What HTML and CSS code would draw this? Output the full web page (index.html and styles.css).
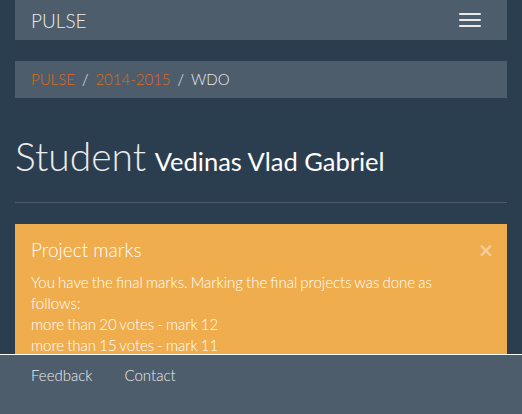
FILE: index.html
```html
<!DOCTYPE html>
<html lang="en">

<head>
    <meta charset="UTF-8">
    <meta name="viewport" content="width=device-width, initial-scale=1.0">
    <title>Student - PULSE</title>
    <link rel="stylesheet" href="styles.css">
</head>

<body>
    <div class="container">
        <nav class="navbar">
            <a class="brand" href="#">PULSE</a>
            <button class="toggle" type="button">
                <span class="bar"></span>
                <span class="bar"></span>
                <span class="bar"></span>
            </button>
        </nav>

        <ul class="breadcrumb">
            <li><a href="#">PULSE</a></li>
            <li><a href="#">2014-2015</a></li>
            <li class="active">WDO</li>
        </ul>

        <div class="page-header">
            <h1>Student <small>Vedinas Vlad Gabriel</small></h1>
        </div>

        <div class="alert">
            <button class="close" type="button">&times;</button>
            <h4>Project marks</h4>
            <p>You have the final marks. Marking the final projects was done as follows:<br>
                more than 20 votes - mark 12<br>
                more than 15 votes - mark 11</p>
        </div>
    </div>

    <footer class="footer">
        <ul class="footer-links">
            <li><a href="#">Feedback</a></li>
            <li><a href="#">Contact</a></li>
        </ul>
    </footer>
</body>

</html>
```

FILE: styles.css
```css
* {
    margin: 0;
    padding: 0;
    box-sizing: border-box;
}

body {
    background-color: #2b3e50;
    color: #ebebeb;
    font-family: Lato, "Open Sans", sans-serif;
    font-size: 15px;
    font-weight: 300;
    line-height: 21px;
    height: 414px;
    overflow: hidden;
}

a {
    text-decoration: none;
}

.container {
    padding: 0 15px;
}

/* top navbar */
.navbar {
    display: flex;
    justify-content: space-between;
    height: 40px;
    background-color: #4e5d6c;
    margin-bottom: 21px;
}

.brand {
    color: #ebebeb;
    font-size: 19px;
    line-height: 21px;
    padding: 10px 16px;
}

.toggle {
    margin: 3px 15px 0 0;
    padding: 9px 10px;
    height: 34px;
    background: none;
    border: 1px solid transparent;
    display: flex;
    flex-direction: column;
    gap: 4px;
}

.bar {
    display: block;
    width: 22px;
    height: 2px;
    background-color: #ebebeb;
    border-radius: 1px;
}

/* breadcrumb */
.breadcrumb {
    list-style: none;
    background-color: #4e5d6c;
    padding: 8px 16px;
    margin-bottom: 37px;
    display: flex;
}

.breadcrumb li + li::before {
    content: "/";
    padding: 0 7px;
    color: #ebebeb;
}

.breadcrumb a {
    color: #df691a;
}

.breadcrumb .active {
    color: #ebebeb;
}

/* page header */
.page-header {
    border-bottom: 1px solid #4e5d6c;
    padding-bottom: 9px;
    margin-bottom: 21px;
}

.page-header h1 {
    font-size: 39px;
    font-weight: 300;
    line-height: 43px;
    margin-bottom: 10px;
    word-spacing: -2px;
}

.page-header small {
    font-size: 25.5px;
    font-weight: 400;
    color: #fff;
    word-spacing: 0;
}

/* alert */
.alert {
    position: relative;
    background-color: #f0ad4e;
    color: #fff;
    padding: 15px 35px 15px 16px;
    word-spacing: -1px;
}

.alert h4 {
    font-size: 19px;
    font-weight: 300;
    line-height: 21px;
    margin-bottom: 12px;
    word-spacing: 0;
}

.close {
    position: absolute;
    top: 15px;
    right: 14px;
    background: none;
    border: none;
    color: #fff;
    opacity: 0.4;
    font-family: Lato, sans-serif;
    font-size: 24px;
    font-weight: 700;
    line-height: 22px;
    cursor: pointer;
}

/* footer */
.footer {
    position: fixed;
    left: 0;
    right: 0;
    bottom: 0;
    height: 60px;
    background-color: #4e5d6c;
    border-top: 1px solid #fff;
}

.footer-links {
    list-style: none;
    display: flex;
    padding-left: 15px;
}

.footer-links a {
    display: block;
    color: #ebebeb;
    padding: 10px 16px;
}
```
